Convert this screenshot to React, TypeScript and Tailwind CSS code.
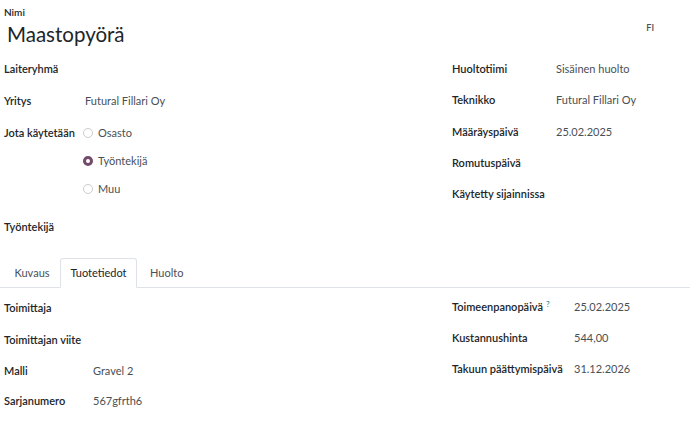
import React from 'react';

const Field: React.FC<{ label: React.ReactNode; value?: string; labelW: string; h?: string }> = ({
  label,
  value,
  labelW,
  h = 'h-[31px]',
}) => (
  <div className={`flex items-center ${h}`}>
    <div className={`${labelW} shrink-0 font-semibold text-[#212529] whitespace-nowrap`}>{label}</div>
    {value && <div className="text-[#4a4f55] whitespace-nowrap">{value}</div>}
  </div>
);

const Radio: React.FC<{ label: string; checked?: boolean }> = ({ label, checked }) => (
  <div className="flex items-center h-[28px] gap-[5px]">
    {checked ? (
      <span className="w-[10px] h-[10px] rounded-full border-[3px] border-[#714b67] bg-white" />
    ) : (
      <span className="w-[10px] h-[10px] rounded-full border border-[#c9ccd0] bg-white" />
    )}
    <span className="text-[#4a4f55]">{label}</span>
  </div>
);

export default function App() {
  return (
    <div className="w-[690px] h-[426px] bg-white overflow-hidden text-[11px] font-['Lato',sans-serif]">
      {/* Header */}
      <div className="flex justify-between pl-[4px] pr-[36px] pt-[5px] h-[54px]">
        <div>
          <div className="text-[10px] font-semibold text-[#212529] leading-[14px]">Nimi</div>
          <div className="text-[20.5px] text-[#212529] leading-[30px] pl-[3px]">Maastopyörä</div>
        </div>
        <div className="text-[9px] font-semibold text-[#4a4f55] pt-[16px]">FI</div>
      </div>

      {/* Main fields */}
      <div className="flex pl-[4px]">
        <div className="w-[448px]">
          <Field label="Laiteryhmä" labelW="w-[81px]" h="h-[31px]" />
          <Field label="Yritys" value="Futural Fillari Oy" labelW="w-[81px]" h="h-[33px]" />
          <div className="flex pt-[1px]">
            <div className="w-[79px] h-[28px] flex items-center font-semibold text-[#212529]">Jota käytetään</div>
            <div className="flex flex-col">
              <Radio label="Osasto" />
              <Radio label="Työntekijä" checked />
              <Radio label="Muu" />
            </div>
          </div>
          <div className="h-[9px]" />
          <Field label="Työntekijä" labelW="w-[81px]" h="h-[30px]" />
        </div>
        <div className="flex-1">
          <Field label="Huoltotiimi" value="Sisäinen huolto" labelW="w-[104px]" h="h-[30px]" />
          <Field label="Teknikko" value="Futural Fillari Oy" labelW="w-[104px]" h="h-[33px]" />
          <Field label="Määräyspäivä" value="25.02.2025" labelW="w-[104px]" />
          <Field label="Romutuspäivä" labelW="w-[104px]" />
          <Field label="Käytetty sijainnissa" labelW="w-[104px]" />
        </div>
      </div>

      {/* Tabs */}
      <div className="mt-[16px] flex border-b border-[#dee2e6] pl-[4px] h-[30px]">
        <div className="w-[56px] flex items-center justify-center text-[#4a4f55] mb-[-1px]">Kuvaus</div>
        <div className="w-[77px] flex items-center justify-center text-[#212529] bg-white border border-[#dee2e6] border-b-white rounded-t-[3px] mb-[-1px]">
          Tuotetiedot
        </div>
        <div className="px-[13px] flex items-center text-[#4a4f55] mb-[-1px]">Huolto</div>
      </div>

      {/* Tab content */}
      <div className="flex pl-[4px] pt-[4px]">
        <div className="w-[448px]">
          <Field label="Toimittaja" labelW="w-[89px]" h="h-[32px]" />
          <Field label="Toimittajan viite" labelW="w-[89px]" h="h-[32px]" />
          <Field label="Malli" value="Gravel 2" labelW="w-[89px]" />
          <Field label="Sarjanumero" value="567gfrth6" labelW="w-[89px]" h="h-[29px]" />
        </div>
        <div className="flex-1">
          <Field
            label={
              <span>
                Toimeenpanopäivä<sup className="text-[8px] text-[#017e84] ml-[3px] font-normal">?</sup>
              </span>
            }
            value="25.02.2025"
            labelW="w-[122px]"
          />
          <Field label="Kustannushinta" value="544,00" labelW="w-[122px]" />
          <Field label="Takuun päättymispäivä" value="31.12.2026" labelW="w-[122px]" />
        </div>
      </div>
    </div>
  );
}
